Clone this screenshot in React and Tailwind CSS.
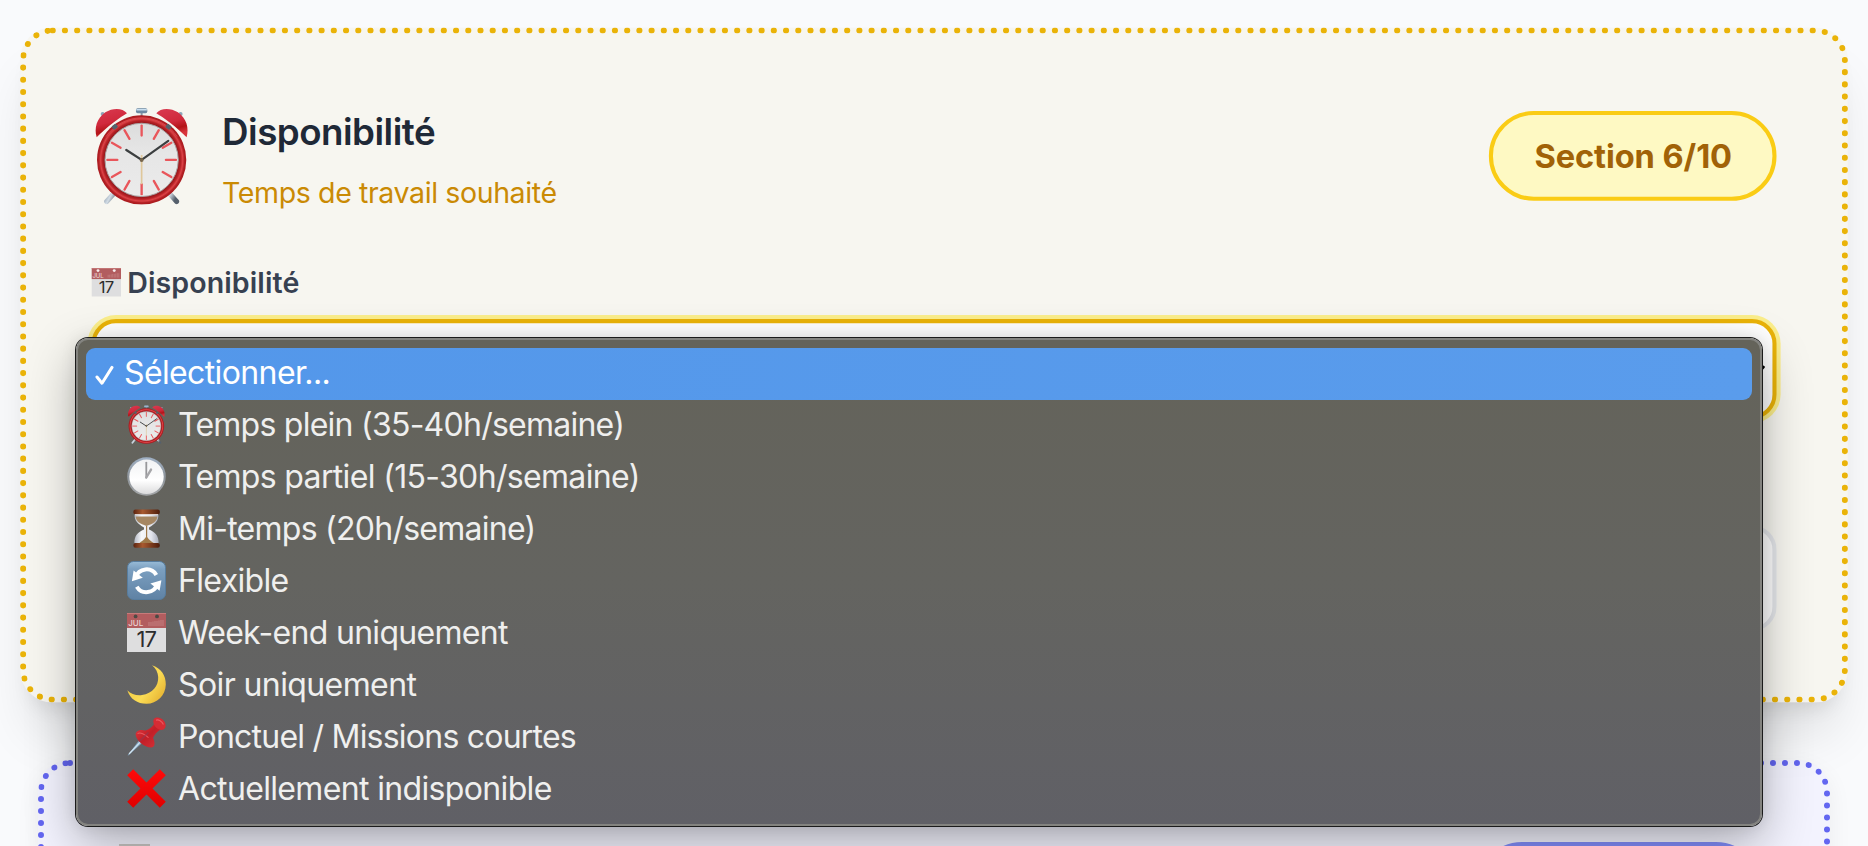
const TICKS = Array.from({ length: 12 }, (_, i) => i * 30);

function AlarmClock({ className }) {
  return (
    <svg viewBox="39 48 290 294" className={className} aria-hidden="true">
      <defs>
        <radialGradient id="ac-ring" cx="0.5" cy="0.5" r="0.5">
          <stop offset="0.82" stopColor="#8f1418" />
          <stop offset="0.88" stopColor="#b82327" />
          <stop offset="0.92" stopColor="#dc4347" />
          <stop offset="0.96" stopColor="#b32024" />
          <stop offset="1" stopColor="#a8181c" />
        </radialGradient>
        <linearGradient id="ac-bell" x1="0" y1="0" x2="0.3" y2="1">
          <stop offset="0" stopColor="#d93a50" />
          <stop offset="0.55" stopColor="#d0293c" />
          <stop offset="0.8" stopColor="#b31418" />
          <stop offset="1" stopColor="#d8343c" />
        </linearGradient>
        <linearGradient id="ac-face" x1="0" y1="0" x2="0" y2="1">
          <stop offset="0" stopColor="#dcdcdc" />
          <stop offset="0.4" stopColor="#e6e6e6" />
          <stop offset="1" stopColor="#ebebeb" />
        </linearGradient>
        <linearGradient id="ac-leg" x1="0" y1="0" x2="1" y2="0.6">
          <stop offset="0" stopColor="#8392a3" />
          <stop offset="0.5" stopColor="#d3dde6" />
          <stop offset="1" stopColor="#55606c" />
        </linearGradient>
      </defs>
      <circle cx="66" cy="69" r="6" fill="#8da4b8" />
      <circle cx="300" cy="69" r="6" fill="#8da4b8" />
      <path d="M112 294 L78 332" stroke="url(#ac-leg)" strokeWidth="15" strokeLinecap="round" />
      <path d="M254 294 L288 332" stroke="url(#ac-leg)" strokeWidth="15" strokeLinecap="round" />
      <path d="M183 60 V92" stroke="#8b97a3" strokeWidth="6" />
      <rect x="166" y="52" width="34" height="15" rx="5" fill="#6e8aa3" />
      <rect x="167" y="54" width="32" height="5" rx="2" fill="#c9dff0" />
      <circle cx="183" cy="207" r="134" fill="url(#ac-ring)" />
      <path d="M76 137 A130 130 0 0 1 290 137" fill="none" stroke="#e7555c" strokeWidth="3" opacity="0.6" />
      <path d="M48 139 C40 112 48 82 74 64 C96 50 126 50 139 67 C120 78 78 108 48 139Z" fill="url(#ac-bell)" />
      <path d="M318 139 C326 112 318 82 292 64 C270 50 240 50 227 67 C246 78 288 108 318 139Z" fill="url(#ac-bell)" />
      <rect x="94" y="101" width="16" height="13" rx="3" fill="#57616b" transform="rotate(-38 102 107)" />
      <rect x="256" y="101" width="16" height="13" rx="3" fill="#57616b" transform="rotate(38 264 107)" />
      <circle cx="183" cy="207" r="110" fill="url(#ac-face)" stroke="#a9a3a3" strokeWidth="3" />
      {TICKS.map((a) => (
        <path key={a} d="M183 104 V134" stroke="#e9565b" strokeWidth="7" strokeLinecap="round" transform={`rotate(${a} 183 207)`} />
      ))}
      <path d="M183 192 V280" stroke="#dfc79b" strokeWidth="5" />
      <path d="M183 207 L137 177" stroke="#3c3f40" strokeWidth="7" strokeLinecap="round" />
      <path d="M183 207 L263 150" stroke="#3c3f40" strokeWidth="6.5" strokeLinecap="round" />
      <circle cx="183" cy="207" r="6" fill="#75654c" />
    </svg>
  );
}

function OneOClock() {
  return (
    <svg viewBox="0 0 39 39" className="size-[39px]" aria-hidden="true">
      <defs>
        <linearGradient id="oc-ring" x1="0" y1="0" x2="0" y2="1">
          <stop offset="0" stopColor="#9fb0c4" />
          <stop offset="0.5" stopColor="#8e959c" />
          <stop offset="1" stopColor="#a4a6a8" />
        </linearGradient>
        <linearGradient id="oc-face" x1="0" y1="0" x2="0" y2="1">
          <stop offset="0" stopColor="#f1f2f4" />
          <stop offset="0.6" stopColor="#ffffff" />
          <stop offset="1" stopColor="#dcdcdd" />
        </linearGradient>
      </defs>
      <circle cx="19.5" cy="19.5" r="19.3" fill="url(#oc-ring)" />
      <circle cx="19.5" cy="19.8" r="17.2" fill="url(#oc-face)" />
      <path d="M19.3 20.5 V5.6" stroke="#97979a" strokeWidth="1.8" strokeLinecap="round" />
      <path d="M19.3 20.5 L24 12.6" stroke="#a6a6a9" strokeWidth="2.4" strokeLinecap="round" />
    </svg>
  );
}

function Hourglass() {
  return (
    <svg viewBox="0 0 39 39" className="size-[39px]" aria-hidden="true">
      <defs>
        <linearGradient id="hg-wood" x1="0" y1="0" x2="1" y2="0">
          <stop offset="0" stopColor="#5a2410" />
          <stop offset="0.35" stopColor="#a8592f" />
          <stop offset="1" stopColor="#4e1d0c" />
        </linearGradient>
        <linearGradient id="hg-glass" x1="0" y1="0" x2="1" y2="0">
          <stop offset="0" stopColor="#b4b9c4" />
          <stop offset="0.3" stopColor="#f7f8fb" />
          <stop offset="0.7" stopColor="#e2e4ec" />
          <stop offset="1" stopColor="#a9adba" />
        </linearGradient>
      </defs>
      <path d="M7.6 5 H31.4 C31.8 12 28 15 22 18.4 V20.6 C28 23 32 27 31.6 34.5 H7.4 C7 27 11 23 17 20.6 V18.4 C11 15 7.2 12 7.6 5Z" fill="url(#hg-glass)" />
      <path d="M8.6 7.6 H30.4 C29.8 12.4 26.5 15 19.5 17 C12.5 15 9.2 12.4 8.6 7.6Z" fill="#a58662" />
      <path d="M19 17 V28 C17 31 13 33.6 11.6 34.6 H27.8 C25.6 33.4 22 31 20.2 28 V17Z" fill="#a07a4a" />
      <rect x="6.4" y="0.4" width="26.4" height="5" rx="2" fill="url(#hg-wood)" />
      <rect x="6.4" y="34" width="26.4" height="4.8" rx="2" fill="url(#hg-wood)" />
      <path d="M8 5.6 H31" stroke="#e9e2de" strokeWidth="0.9" />
    </svg>
  );
}

function RefreshBadge() {
  return (
    <svg viewBox="0 0 39 39" className="size-[39px]" aria-hidden="true">
      <defs>
        <linearGradient id="rf-bg" x1="0" y1="0" x2="0" y2="1">
          <stop offset="0" stopColor="#98bbd7" />
          <stop offset="0.2" stopColor="#7b9fc0" />
          <stop offset="1" stopColor="#5f82a4" />
        </linearGradient>
      </defs>
      <rect x="0.5" y="0.5" width="38" height="38" rx="6" fill="url(#rf-bg)" stroke="#577d9f" />
      <path d="M8.8 16.2 A11.3 11.3 0 0 1 29.3 13.9" fill="none" stroke="#fff" strokeWidth="4" />
      <path d="M30.2 23.4 A11.3 11.3 0 0 1 9.8 25.7" fill="none" stroke="#fff" strokeWidth="4" />
      <path d="M4.9 20.2 L6.6 9.6 L15.8 16.8Z" fill="#fff" />
      <path d="M34.4 19.2 L32.6 29.8 L23.4 22.6Z" fill="#fff" />
    </svg>
  );
}

function Calendar({ className, hole = "#4c4a45" }) {
  return (
    <svg viewBox="0 0 39 39" preserveAspectRatio="none" className={className} aria-hidden="true">
      <rect width="39" height="39" fill="#dededf" />
      <rect width="39" height="15" fill="#b25d5f" />
      <path d="M0 0.5 H39" stroke="#c77a7a" />
      <circle cx="8.6" cy="3.4" r="1.9" fill={hole} />
      <circle cx="30" cy="3.4" r="1.9" fill={hole} />
      <text x="1.2" y="13" fill="#ead0d0" className="font-['Inter'] text-[8px] font-medium tracking-normal">JUL</text>
      <path d="M22 9 V13 M24 9 V13 M26 8.5 V13 M28 8 V13 M30 8 V13 M32 7.5 V13 M34 7 V13 M36 7 V13" stroke="#c98a8a" strokeWidth="0.8" />
      <text x="19.2" y="34" textAnchor="middle" fill="#2d2d2d" className="font-['Inter'] text-[22px] font-normal tracking-[-1px]">17</text>
    </svg>
  );
}

function Moon() {
  return (
    <svg viewBox="0 0 39 39" className="size-[39px]" aria-hidden="true">
      <defs>
        <linearGradient id="mn" x1="0" y1="0.2" x2="1" y2="0.9">
          <stop offset="0" stopColor="#f0c63c" />
          <stop offset="0.55" stopColor="#fbdc55" />
          <stop offset="1" stopColor="#e3ac2c" />
        </linearGradient>
      </defs>
      <path d="M25 0.3 C34 3 39 10.5 38.8 19.5 C38.5 30.5 30 38.8 19.5 38.8 C10.5 38.8 3 34 0.3 25.2 C4 29 9.5 30.8 15 30 C25.5 28.6 31.6 21 31.2 12 C31 7.5 28.8 3.2 25 0.3Z" fill="url(#mn)" />
    </svg>
  );
}

function Pushpin() {
  return (
    <svg viewBox="0 0 39 39" className="size-[39px]" aria-hidden="true">
      <defs>
        <linearGradient id="pp-a" x1="0" y1="0" x2="1" y2="1">
          <stop offset="0" stopColor="#e23a42" />
          <stop offset="0.5" stopColor="#c21f27" />
          <stop offset="1" stopColor="#d8343a" />
        </linearGradient>
      </defs>
      <path d="M0.6 38.2 L13.5 21.5 L16.8 24.6 L1.2 38.6Z" fill="#87aac6" />
      <path d="M2 37 L15 23.2" stroke="#d5e6f2" strokeWidth="1.1" />
      <path d="M27.5 6.5 C25 10 22 12.5 18.5 13.5 C13 11.8 8.6 14 8.6 17.6 C9 23.5 17.5 30.6 24 30.6 C28 30.4 28.6 26 26 21 C27.5 17.5 30 14.6 33.5 12.6Z" fill="url(#pp-a)" />
      <path d="M27 1.8 C29.5 -0.6 34.5 0.6 37 4 C39.5 7.4 39 11.6 36 12.8 C32.5 13.6 28.6 11.2 27.2 8 C26.2 5.6 26 3 27 1.8Z" fill="#d62c34" />
      <path d="M29 3.2 C31.5 2 35 4.5 36.4 7.6" fill="none" stroke="#ea5a60" strokeWidth="1.1" />
      <path d="M10.5 16.6 C13 15 18 17 21.5 20.6" fill="none" stroke="#e8575d" strokeWidth="1.1" />
      <path d="M12 24.8 L21.5 15.5" stroke="#8f3a55" strokeWidth="1.6" opacity="0.6" />
    </svg>
  );
}

function CrossMark() {
  return (
    <svg viewBox="0 0 39 39" className="size-[39px]" aria-hidden="true">
      <defs>
        <linearGradient id="cm" x1="0" y1="0" x2="0" y2="1">
          <stop offset="0" stopColor="#ff0a0a" />
          <stop offset="1" stopColor="#e00000" />
        </linearGradient>
      </defs>
      <path d="M6.2 0.2 L19.5 13.5 L32.8 0.2 L38.8 6.2 L25.5 19.5 L38.8 32.8 L32.8 38.8 L19.5 25.5 L6.2 38.8 L0.2 32.8 L13.5 19.5 L0.2 6.2Z" fill="url(#cm)" />
    </svg>
  );
}

const OPTIONS = [
  { icon: <AlarmClock className="size-[39px]" />, label: "Temps plein (35-40h/semaine)", fit: "tracking-[-0.75px]" },
  { icon: <OneOClock />, label: "Temps partiel (15-30h/semaine)", fit: "tracking-[-0.66px]" },
  { icon: <Hourglass />, label: "Mi-temps (20h/semaine)", fit: "tracking-[-0.74px]" },
  { icon: <RefreshBadge />, label: "Flexible", fit: "tracking-[-0.65px]" },
  { icon: <Calendar className="size-[39px]" />, label: "Week-end uniquement", fit: "tracking-[-0.7px]" },
  { icon: <Moon />, label: "Soir uniquement", fit: "tracking-[-0.6px]" },
  { icon: <Pushpin />, label: "Ponctuel / Missions courtes", fit: "tracking-[-0.77px]" },
  { icon: <CrossMark />, label: "Actuellement indisponible", fit: "tracking-[-0.65px]" },
];

function SelectMenu() {
  return (
    <div className="absolute left-[76px] top-[338px] h-[488px] w-[1686px] rounded-[12px] border-2 border-[#83837f] bg-gradient-to-b from-[#64635a] via-[#646460] to-[#606066] px-2 pt-2 font-['Inter',sans-serif] text-[32px] font-[430] text-[#efefee] shadow-[0_0_0_1px_#1b1b1b,0_0_16px_rgba(0,0,0,0.1),0_18px_50px_rgba(0,0,0,0.3)]">
      <div className="flex h-[52px] items-center rounded-[9px] bg-gradient-to-r from-[#5397ea] to-[#5a9cec] pl-[9px] text-white">
        <svg viewBox="0 0 19 21" className="mt-[2px] h-[21px] w-[19px]" fill="none" stroke="currentColor" strokeWidth="3" strokeLinecap="round" strokeLinejoin="round" aria-hidden="true">
          <path d="M2 12 L7 18.2 L17 2.4" />
        </svg>
        <span className="ml-[10px] whitespace-nowrap pb-[3px] leading-[48px] tracking-[-0.62px]">Sélectionner...</span>
      </div>
      {OPTIONS.map((o) => (
        <div key={o.label} className="flex h-[52px] items-center pl-[41px]">
          <span className="mb-[4px] shrink-0">{o.icon}</span>
          <span className={`ml-[12px] whitespace-nowrap pb-[3px] leading-[48px] ${o.fit}`}>{o.label}</span>
        </div>
      ))}
    </div>
  );
}

export default function App() {
  return (
    <div className="relative h-[846px] w-[1868px] overflow-hidden bg-[#f9fafc] px-[38px] pt-[34px] font-['Inter',sans-serif]">
      <section className="h-[662px] scale-[1.02] rounded-[32px] border-[6px] border-dotted border-[#eab308] bg-[#f7f6f0] p-16 shadow-[0_40px_50px_-10px_rgba(0,0,0,0.1),0_16px_20px_-12px_rgba(0,0,0,0.1)]">
        <header className="mb-12 flex h-28 items-center justify-between">
          <div className="flex items-center gap-6">
            <span className="w-[104px] pl-0.5">
              <AlarmClock className="h-[96px] w-[95px]" />
            </span>
            <div className="pt-1">
              <h2 className="mb-3 text-[36px] font-semibold leading-[56px] tracking-[-0.5px] text-[#1f2937]">Disponibilité</h2>
              <p className="text-[28px] leading-10 tracking-[-0.4px] text-[#ca8a04]">Temps de travail souhaité</p>
            </div>
          </div>
          <span className="flex h-[88px] w-[282px] items-center justify-center rounded-full border-4 border-[#facc15] bg-[#fef9c3] pl-px pt-px text-[32px] font-bold tracking-[-0.1px] text-[#a16207]">
            Section 6/10
          </span>
        </header>
        <label className="mb-4 flex h-10 items-center gap-[6px] text-[28px] font-semibold text-[#374151]">
          <Calendar className="h-[28px] w-[29px]" hole="#f6eeee" />
          <span className="tracking-[0.1px]">Disponibilité</span>
        </label>
        <div className="mb-[104px] flex h-[98px] items-center justify-end rounded-[24px] border-4 border-[#eab308] bg-white pr-[7px] shadow-[0_0_0_4px_#fbee8b]">
          <svg viewBox="0 0 18 12" className="mt-1 h-3 w-[18px]" fill="none" stroke="#000" strokeWidth="3" strokeLinecap="round" aria-hidden="true">
            <path d="M2 2 L9 10 L16 2" />
          </svg>
        </div>
        <div className="h-[104px] rounded-[24px] border-4 border-[#e5e7eb] bg-white" />
      </section>
      <section className="mt-16 h-[400px] rounded-[32px] border-[6px] border-dotted border-[#6366f1] bg-[#f3f3fe] p-16 shadow-[0_8px_24px_rgba(0,0,0,0.06)]">
        <header className="flex h-28 items-center justify-between">
          <span className="ml-[11px] h-[85px] w-[31px] bg-[#c9c6c4]" />
          <span className="h-[88px] w-[282px] rounded-full border-4 border-[#818cf8] bg-[#e0e7ff]" />
        </header>
      </section>
      <SelectMenu />
    </div>
  );
}
